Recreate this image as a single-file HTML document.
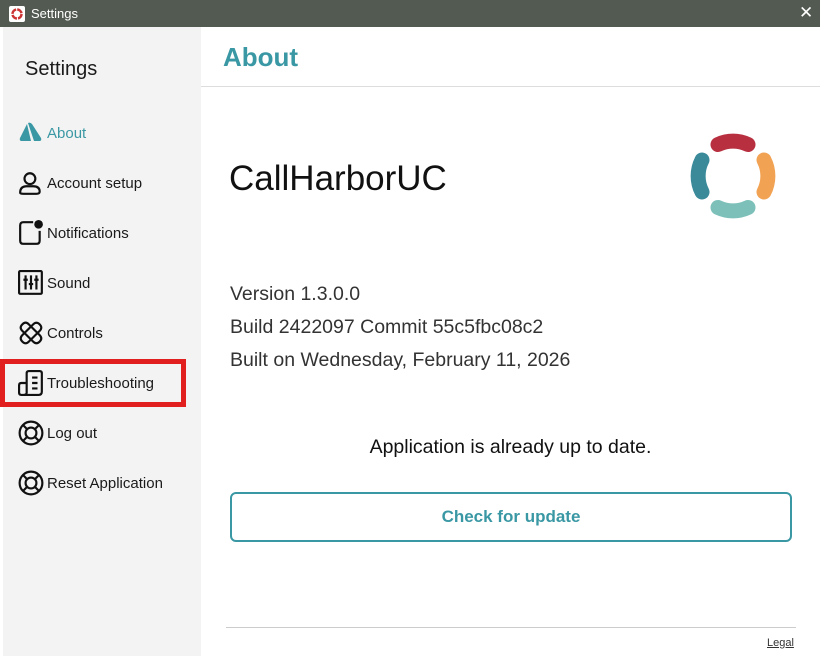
<!DOCTYPE html>
<html><head><style>
*{margin:0;padding:0;box-sizing:border-box}
body{width:820px;height:656px;overflow:hidden;background:#fff;font-family:"Liberation Sans",sans-serif;position:relative}
.tb{position:absolute;left:0;top:0;width:820px;height:27px;background:#535a51;color:#fff;font-size:13px}
.side{position:absolute;left:3px;top:27px;width:198px;height:629px;background:#f3f3f3}
.it{position:absolute;left:44px;font-size:15px;color:#1a1a1a}
.ic{position:absolute;left:15px}
.main{position:absolute;left:201px;top:27px;width:619px;height:629px}
</style></head><body>
<div class="tb">
<svg style="position:absolute;left:9px;top:6px" width="16" height="16" viewBox="0 0 16 16"><rect width="16" height="16" rx="2" fill="#fff"/><circle cx="8" cy="8" r="4.5" fill="none" stroke="#c33" stroke-width="2.5" stroke-dasharray="6 1.1"/></svg>
<span style="position:absolute;left:31px;top:6px">Settings</span>
<span style="position:absolute;left:799px;top:3px;font-size:17px">✕</span>
</div>
<div class="side">
<div style="position:absolute;left:22px;top:31px;font-size:20px;color:#1a1a1a">Settings</div>
<svg class="ic" style="top:95px" width="26" height="22" viewBox="0 0 26 22"><path d="M9 2 L2 16 Q1 19 4 19 L13 19 Z" fill="#3a98a4"/><path d="M10 1 Q12 0 14 2 L23 16 Q24 19 21 19 L16 19 Z" fill="#3a98a4"/></svg>
<div class="it" style="top:98px;color:#3a98a4">About</div>
<svg class="ic" style="top:143px" width="26" height="26" viewBox="0 0 24 24" fill="none" stroke="#111" stroke-width="2"><circle cx="11" cy="8" r="5"/><path d="M2 21 Q2 15 8 15 L14 15 Q20 15 20 20 Q20 22 17 22 L5 22 Q2 22 2 21Z"/></svg>
<div class="it" style="top:148px">Account setup</div>
<svg class="ic" style="top:193px" width="26" height="26" viewBox="0 0 24 24" fill="none" stroke="#111" stroke-width="2"><path d="M14 2 L5 2 Q2 2 2 5 L2 19 Q2 22 5 22 L17 22 Q20 22 20 19 L20 10"/><circle cx="19" cy="4" r="4" fill="#111" stroke="none"/></svg>
<div class="it" style="top:198px">Notifications</div>
<svg class="ic" style="top:243px" width="26" height="26" viewBox="0 0 24 24" fill="none" stroke="#111" stroke-width="2"><rect x="1" y="1" width="21" height="21" rx="1"/><path d="M7 5v13M12 5v13M17 5v13M5 9h4M10 13h4M15 9h4"/></svg>
<div class="it" style="top:248px">Sound</div>
<svg class="ic" style="top:293px" width="26" height="26" viewBox="0 0 24 24" fill="none" stroke="#111" stroke-width="2"><path d="M4 4 Q7 1 10 4 L20 14 Q23 17 20 20 Q17 23 14 20 L4 10 Q1 7 4 4Z"/><path d="M20 4 Q17 1 14 4 L4 14 Q1 17 4 20 Q7 23 10 20 L20 10 Q23 7 20 4Z"/></svg>
<div class="it" style="top:298px">Controls</div>
<div style="position:absolute;left:-3px;top:332px;width:186px;height:48px;border:5px solid #e21f1f"></div>
<svg class="ic" style="top:343px" width="26" height="26" viewBox="0 0 24 24" fill="none" stroke="#111" stroke-width="2"><path d="M8 12 L3 12 Q1 12 1 14 L1 21 Q1 23 3 23 L19 23 Q22 23 22 20 L22 3 Q22 1 20 1 L10 1 Q8 1 8 3 L8 21 Q8 23 5 23"/><path d="M13 7h5M13 12h5M13 17h5"/></svg>
<div class="it" style="top:348px">Troubleshooting</div>
<svg class="ic" style="top:393px" width="26" height="26" viewBox="0 0 24 24" fill="none" stroke="#111" stroke-width="2"><circle cx="12" cy="12" r="10.5"/><circle cx="12" cy="12" r="5"/><path d="M4.5 4.5l4 4M19.5 4.5l-4 4M4.5 19.5l4-4M19.5 19.5l-4-4"/></svg>
<div class="it" style="top:398px">Log out</div>
<svg class="ic" style="top:443px" width="26" height="26" viewBox="0 0 24 24" fill="none" stroke="#111" stroke-width="2"><circle cx="12" cy="12" r="10.5"/><circle cx="12" cy="12" r="5"/><path d="M4.5 4.5l4 4M19.5 4.5l-4 4M4.5 19.5l4-4M19.5 19.5l-4-4"/></svg>
<div class="it" style="top:448px">Reset Application</div>
</div>
<div class="main">
<div style="position:absolute;left:22px;top:15px;font-size:26px;font-weight:bold;color:#3a98a4">About</div>
<div style="position:absolute;left:0;top:59px;width:619px;height:1px;background:#ddd"></div>
<div style="position:absolute;left:28px;top:132px;font-size:35px;color:#111">CallHarborUC</div>
<svg style="position:absolute;left:480px;top:100px" width="110" height="100" viewBox="480 100 110 100" fill="none" stroke-width="15" stroke-linecap="round">
<g transform="translate(532,149)">
<path d="M-15 -31.5 A35 35 0 0 1 15 -31.5" stroke="#b83040"/>
<path d="M-31 -16 A35 35 0 0 0 -31 16" stroke="#3a8a9a"/>
<path d="M31 -16 A35 35 0 0 1 31 16" stroke="#f2a253"/>
<path d="M-15 31.5 A35 35 0 0 0 15 31.5" stroke="#7cc0b9"/>
</g></svg>
<div style="position:absolute;left:29px;top:251px;font-size:19.5px;color:#333;line-height:33px">Version 1.3.0.0<br>Build 2422097 Commit 55c5fbc08c2<br>Built on Wednesday, February 11, 2026</div>
<div style="position:absolute;left:0;width:619px;top:409px;text-align:center;font-size:19.5px;color:#111">Application is already up to date.</div>
<div style="position:absolute;left:29px;top:465px;width:562px;height:50px;border:2px solid #3a98a4;border-radius:6px;text-align:center;line-height:46px;font-size:17px;font-weight:bold;color:#3a98a4">Check for update</div>
<div style="position:absolute;left:25px;top:600px;width:570px;height:1px;background:#ccc"></div>
<div style="position:absolute;left:566px;top:610px;font-size:11px;color:#333;text-decoration:underline">Legal</div>
</div>
</body></html>
